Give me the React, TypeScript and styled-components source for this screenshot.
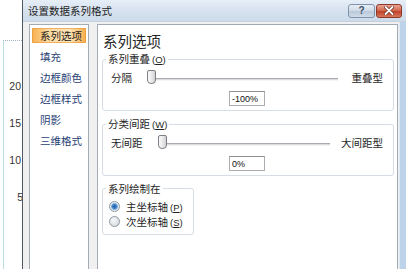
import React from "react";
import styled, { createGlobalStyle } from "styled-components";

const Global = createGlobalStyle`
  html, body { margin: 0; padding: 0; background: #fff; }
  body {
    width: 406px; height: 269px; overflow: hidden;
    font-family: "Noto Sans CJK SC", "Noto Sans", sans-serif;
  }
`;

const Screen = styled.div`
  display: flex;
  width: 406px;
  height: 269px;
  overflow: hidden;
  background: #fff;
`;

/* ---------- chart strip behind the dialog ---------- */
const ChartStrip = styled.div`
  width: 22px;
  flex: none;
  padding-top: 40px;
  box-sizing: border-box;
`;

const ChartArea = styled.div`
  height: 100%;
  margin-left: 3px;
  border-top: 1px dotted #9fb3c2;
  border-left: 1px solid #b9dcdc;
  display: flex;
  flex-direction: column;
  align-items: flex-end;
  gap: 25px;
  padding-top: 39px;
  box-sizing: border-box;
`;

const Tick = styled.span<{ $shift?: number }>`
  font-family: "Liberation Sans", Arial, sans-serif;
  font-size: 10.5px;
  line-height: 12px;
  color: #333;
  margin-right: ${(p) => p.$shift ?? 1}px;
`;

/* ---------- dialog ---------- */
const Dialog = styled.div`
  flex: 1;
  display: flex;
  flex-direction: column;
  border-left: 1px solid #4f5862;
  min-width: 0;
`;

const TitleBar = styled.div`
  height: 22px;
  flex: none;
  display: flex;
  align-items: center;
  padding: 0 4px 0 5px;
  background: linear-gradient(#e6eef7, #d5e1ee 55%, #cddbea);
  border-bottom: 1px solid #c3d0de;
  box-sizing: border-box;
`;

const Title = styled.span`
  flex: 1;
  font-size: 10.5px;
  line-height: 14px;
  color: #1c1c1c;
`;

const CaptionButtons = styled.div`
  display: flex;
  gap: 1px;
`;

const CapButton = styled.div<{ $danger?: boolean }>`
  width: ${(p) => (p.$danger ? 26 : 27)}px;
  height: 14px;
  box-sizing: border-box;
  border: 1px solid ${(p) => (p.$danger ? "#8d3a2c" : "#7f93ad")};
  border-radius: 3px;
  background: ${(p) =>
    p.$danger
      ? "linear-gradient(#e9a592, #d46a53 45%, #c0432a 55%, #d8785c)"
      : "linear-gradient(#e8eef6, #d2dce8 45%, #bac9da 55%, #cfdbe8)"};
  display: flex;
  align-items: center;
  justify-content: center;
  font-family: "Liberation Sans", Arial, sans-serif;
  font-weight: bold;
  font-size: 10px;
  color: #3d4f66;
`;

const Body = styled.div`
  flex: 1;
  display: flex;
  background: #f0f0f0;
  border-right: 6px solid #bcd3ea;
  box-shadow: inset -1px 0 0 #dfe9f4;
  padding: 2px 2px 0 6px;
  gap: 8px;
  min-height: 0;
`;

/* ---------- nav ---------- */
const Nav = styled.div`
  width: 60px;
  flex: none;
  box-sizing: border-box;
  background: #fff;
  border: 1px solid #a3abb5;
  border-bottom: none;
  display: flex;
  flex-direction: column;
`;

const NavItem = styled.div<{ $active?: boolean }>`
  height: 21px;
  display: flex;
  align-items: center;
  padding: 3px 2px;
  box-sizing: border-box;
  font-size: 10.5px;
  color: ${(p) => (p.$active ? "#1e1e1e" : "#1f3e73")};
  & > span {
    flex: 1;
    height: 100%;
    display: flex;
    align-items: center;
    padding-left: 8px;
    box-sizing: border-box;
    border-radius: 1px;
    ${(p) =>
      p.$active
        ? `background: linear-gradient(to right, #f7b04f, #fcd9a0 30%, #fde3b4 70%, #f6ad4a);
           box-shadow: inset 0 0 0 1px rgba(230,150,50,0.6);`
        : ""}
  }
`;

/* ---------- content ---------- */
const Content = styled.div`
  flex: 1;
  background: #fff;
  border: 1px solid #a3abb5;
  border-bottom: none;
  padding: 7px 3px 0 4px;
  box-sizing: border-box;
  display: flex;
  flex-direction: column;
`;

const Heading = styled.div`
  font-size: 14.5px;
  line-height: 18px;
  color: #262626;
  margin: 0 0 2px 1px;
`;

const Group = styled.fieldset<{ $w?: number; $mt?: number }>`
  margin: ${(p) => p.$mt ?? 0}px 0 0 0;
  padding: 0 10px 4px 8px;
  border: 1px solid #d6dde4;
  border-radius: 3px;
  min-width: 0;
  ${(p) => (p.$w ? `width: ${p.$w}px; box-sizing: border-box; padding: 4px 6px 5px 6px;` : "")}
`;

const Legend = styled.legend<{ $offset?: number }>`
  padding: 0 2px;
  margin-left: ${(p) => p.$offset ?? -5}px;
  font-size: 10.5px;
  line-height: 13px;
  color: #1e1e1e;
`;

const Key = styled.span`
  font-family: "Liberation Sans", Arial, sans-serif;
  font-size: 9.5px;
  margin-left: 2px;
  & u { text-underline-offset: 1px; }
`;

const SliderRow = styled.div`
  display: flex;
  align-items: center;
  height: 17px;
  margin-top: 3px;
`;

const SideLabel = styled.span`
  font-size: 10.5px;
  line-height: 13px;
  color: #1e1e1e;
  white-space: nowrap;
`;

const Track = styled.div<{ $mr?: number }>`
  position: relative;
  flex: 1;
  height: 1px;
  margin: 3px ${(p) => p.$mr ?? 14}px 0 15px;
  border-top: 1px solid #a8acb2;
  border-bottom: 1px solid #f4f4f4;
  background: #dcdcdc;
`;

const Thumb = styled.div`
  position: absolute;
  left: 0;
  top: -9px;
  width: 9px;
  height: 14px;
  box-sizing: border-box;
  border: 1px solid #7c8086;
  border-radius: 2px 2px 4px 4px;
  background: linear-gradient(to right, #fbfbfb, #e6e6e6 60%, #d0d0d0);
`;

const ValueRow = styled.div`
  display: flex;
  justify-content: center;
  margin-top: 5px;
`;

const ValueBox = styled.input`
  width: 36px;
  height: 15px;
  box-sizing: border-box;
  border: 1px solid #abadb3;
  border-top-color: #8e9196;
  padding: 0 2px;
  margin: 0;
  font-family: "Liberation Sans", Arial, sans-serif;
  font-size: 9px;
  color: #111;
  background: #fff;
  outline: none;
`;

const RadioRow = styled.label`
  display: flex;
  align-items: center;
  gap: 6px;
  height: 15px;
  font-size: 10.5px;
  color: #1e1e1e;
`;

const RadioDot = styled.span<{ $on?: boolean }>`
  width: 11px;
  height: 11px;
  box-sizing: border-box;
  border-radius: 50%;
  border: 1px solid #8f979f;
  background: ${(p) =>
    p.$on
      ? "radial-gradient(circle, #1f5fa8 0, #3d7fc7 2px, #8fb9e4 3.2px, #e7edf3 3.8px, #d7dde4 100%)"
      : "radial-gradient(circle at 40% 35%, #f6f7f8, #cfd4da)"};
`;

export default function App() {
  return (
    <>
      <Global />
      <Screen>
        <ChartStrip>
          <ChartArea>
            <Tick>20</Tick>
            <Tick>15</Tick>
            <Tick>10</Tick>
            <Tick $shift={-1}>5</Tick>
          </ChartArea>
        </ChartStrip>
        <Dialog>
          <TitleBar>
            <Title>设置数据系列格式</Title>
            <CaptionButtons>
              <CapButton>?</CapButton>
              <CapButton $danger>
                <svg width="10" height="9" viewBox="0 0 10 9">
                  <path d="M1.5 1 L8.5 8 M8.5 1 L1.5 8" stroke="#6b2418" strokeWidth="3.2" strokeLinecap="round" />
                  <path d="M1.5 1 L8.5 8 M8.5 1 L1.5 8" stroke="#fff" strokeWidth="1.8" strokeLinecap="round" />
                </svg>
              </CapButton>
            </CaptionButtons>
          </TitleBar>
          <Body>
            <Nav>
              <NavItem $active><span>系列选项</span></NavItem>
              <NavItem><span>填充</span></NavItem>
              <NavItem><span>边框颜色</span></NavItem>
              <NavItem><span>边框样式</span></NavItem>
              <NavItem><span>阴影</span></NavItem>
              <NavItem><span>三维格式</span></NavItem>
            </Nav>
            <Content>
              <Heading>系列选项</Heading>
              <Group>
                <Legend>
                  系列重叠<Key>(<u>O</u>)</Key>
                </Legend>
                <SliderRow>
                  <SideLabel>分隔</SideLabel>
                  <Track>
                    <Thumb />
                  </Track>
                  <SideLabel>重叠型</SideLabel>
                </SliderRow>
                <ValueRow>
                  <ValueBox readOnly value="-100%" />
                </ValueRow>
              </Group>
              <Group $mt={6}>
                <Legend>
                  分类间距<Key>(<u>W</u>)</Key>
                </Legend>
                <SliderRow>
                  <SideLabel>无间距</SideLabel>
                  <Track $mr={11}>
                    <Thumb />
                  </Track>
                  <SideLabel>大间距型</SideLabel>
                </SliderRow>
                <ValueRow>
                  <ValueBox readOnly value="0%" />
                </ValueRow>
              </Group>
              <Group $mt={6} $w={92}>
                <Legend $offset={-3}>系列绘制在</Legend>
                <RadioRow>
                  <RadioDot $on />
                  <span>
                    主坐标轴<Key>(<u>P</u>)</Key>
                  </span>
                </RadioRow>
                <RadioRow>
                  <RadioDot />
                  <span>
                    次坐标轴<Key>(<u>S</u>)</Key>
                  </span>
                </RadioRow>
              </Group>
            </Content>
          </Body>
        </Dialog>
      </Screen>
    </>
  );
}
